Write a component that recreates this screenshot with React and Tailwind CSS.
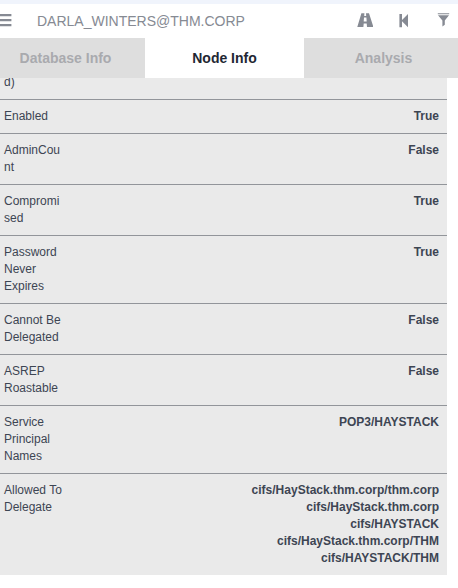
import { useState } from 'react';

const TABS = ['Database Info', 'Node Info', 'Analysis'];

const PROPERTIES = [
  { label: 'Enabled', values: ['True'] },
  { label: 'AdminCount', values: ['False'] },
  { label: 'Compromised', values: ['True'] },
  { label: 'Password Never Expires', values: ['True'] },
  { label: 'Cannot Be Delegated', values: ['False'] },
  { label: 'ASREP Roastable', values: ['False'] },
  { label: 'Service Principal Names', values: ['POP3/HAYSTACK'] },
  {
    label: 'Allowed To Delegate',
    values: [
      'cifs/HayStack.thm.corp/thm.corp',
      'cifs/HayStack.thm.corp',
      'cifs/HAYSTACK',
      'cifs/HayStack.thm.corp/THM',
      'cifs/HAYSTACK/THM',
    ],
  },
];

function MenuIcon() {
  return (
    <svg className="block h-4 w-3" viewBox="0 0 12 16" fill="currentColor" aria-hidden="true">
      <path d="M0 1h11.4v2.2H0zM0 6h11.4v2.2H0zM0 11h11.4v2.2H0z" />
    </svg>
  );
}

function RoadIcon() {
  return (
    <svg className="block size-4" viewBox="0 0 16 16" fill="currentColor" aria-hidden="true">
      <path
        fillRule="evenodd"
        d="M4.4.2h3L7.2 3h2L9 .2h3L16.4 14H10l-.3-3.4h-3L6.4 14H.3zM7 4.6l-.3 4h3l-.3-4z"
      />
    </svg>
  );
}

function StepBackIcon() {
  return (
    <svg className="block size-4" viewBox="0 0 16 16" fill="currentColor" aria-hidden="true">
      <path d="M3.4 1H6v5.9L12 1v13.2L6 8.3v5.9H3.4z" />
    </svg>
  );
}

function FilterIcon() {
  return (
    <svg className="block size-4" viewBox="0 0 16 16" fill="currentColor" aria-hidden="true">
      <path d="M2.8.2h11.4v1H2.8zM3 2.2h11L9.8 7.4v4.4l-2.4 1.6v-6z" />
    </svg>
  );
}

export default function App() {
  const [query, setQuery] = useState('DARLA_WINTERS@THM.CORP');
  const [activeTab, setActiveTab] = useState('Node Info');

  return (
    <div className="overflow-hidden border-t-4 border-[#f0f4fc] bg-white font-['Liberation_Sans',Arial,sans-serif] text-[#3d4553]">
      <header className="flex h-[34px] items-center pr-[7px] text-[#868a93]">
        <button type="button" aria-label="More info">
          <MenuIcon />
        </button>
        <input
          type="text"
          aria-label="Search for a node"
          value={query}
          onChange={(e) => setQuery(e.target.value)}
          className="min-w-0 flex-1 pl-[25px] text-sm outline-none"
        />
        <div className="flex gap-[23px]">
          <button type="button" aria-label="Pathfinding">
            <RoadIcon />
          </button>
          <button type="button" aria-label="Back">
            <StepBackIcon />
          </button>
          <button type="button" aria-label="Filter edge types">
            <FilterIcon />
          </button>
        </div>
      </header>

      {/* Tab strip runs past both edges of the panel */}
      <div role="tablist" className="-mr-[5px] -ml-[14px] flex h-10">
        {TABS.map((tab) => (
          <button
            key={tab}
            type="button"
            role="tab"
            aria-selected={tab === activeTab}
            onClick={() => setActiveTab(tab)}
            className={`flex-1 text-sm font-bold ${tab === activeTab ? 'bg-white text-[#1f2733]' : 'bg-[#dedede] text-[#a9aaae]'}`}
          >
            {tab}
          </button>
        ))}
      </div>

      <div className="mr-[11px] overflow-hidden bg-[#eaeaea]">
        {/* Scrolled so that the first row is cut off by the tabs */}
        <table className="-mt-1 w-full table-fixed border-collapse text-xs/[17px]">
          <colgroup>
            <col className="w-[68px]" />
            <col />
          </colgroup>
          <tbody>
            <tr>
              <th scope="row" className="px-1 pb-2 text-left font-normal">d)</th>
              <td />
            </tr>
            {PROPERTIES.map(({ label, values }) => (
              <tr key={label} className="border-t border-[#92959a]">
                <th scope="row" className="px-1 py-2 text-left align-top font-normal wrap-break-word">
                  {label}
                </th>
                <td className="px-2 py-2 text-right align-top font-bold">
                  {values.map((value) => (
                    <div key={value}>{value}</div>
                  ))}
                </td>
              </tr>
            ))}
          </tbody>
        </table>
      </div>
    </div>
  );
}
